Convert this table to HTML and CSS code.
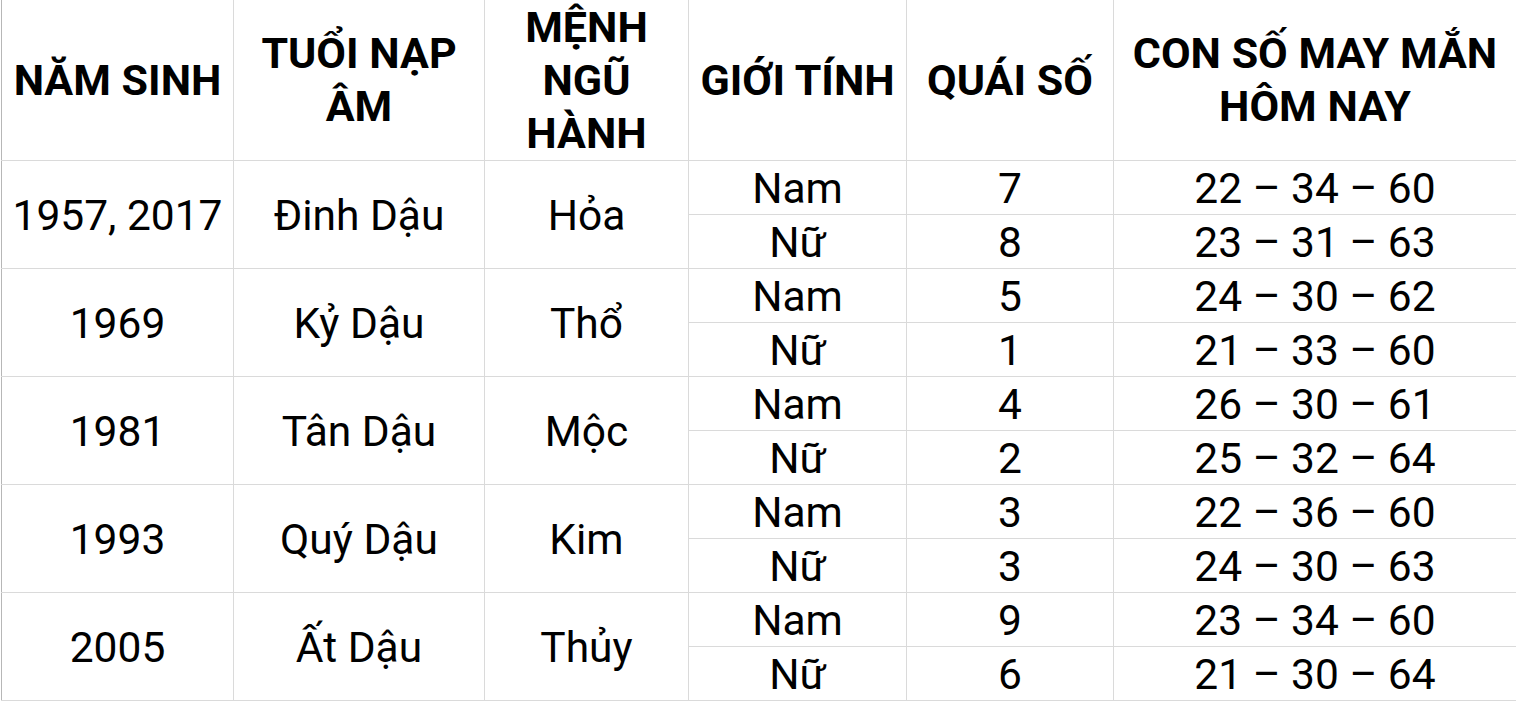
FILE: index.html
```html
<!DOCTYPE html>
<html lang="vi">
<head>
<meta charset="utf-8">
<link rel="stylesheet" href="styles.css">
</head>
<body>
<table class="tbl">
  <colgroup>
    <col class="c1"><col class="c2"><col class="c3"><col class="c4"><col class="c5"><col class="c6">
  </colgroup>
  <thead>
    <tr class="hrow">
      <th class="first">NĂM SINH</th>
      <th>TUỔI NẠP ÂM</th>
      <th>MỆNH NGŨ HÀNH</th>
      <th>GIỚI TÍNH</th>
      <th>QUÁI SỐ</th>
      <th>CON SỐ MAY MẮN HÔM NAY</th>
    </tr>
  </thead>
  <tbody>
    <tr><td class="first" rowspan="2">1957, 2017</td><td rowspan="2">Đinh Dậu</td><td rowspan="2">Hỏa</td><td>Nam</td><td>7</td><td>22 – 34 – 60</td></tr>
    <tr><td>Nữ</td><td>8</td><td>23 – 31 – 63</td></tr>
    <tr><td class="first" rowspan="2">1969</td><td rowspan="2">Kỷ Dậu</td><td rowspan="2">Thổ</td><td>Nam</td><td>5</td><td>24 – 30 – 62</td></tr>
    <tr><td>Nữ</td><td>1</td><td>21 – 33 – 60</td></tr>
    <tr><td class="first" rowspan="2">1981</td><td rowspan="2">Tân Dậu</td><td rowspan="2">Mộc</td><td>Nam</td><td>4</td><td>26 – 30 – 61</td></tr>
    <tr><td>Nữ</td><td>2</td><td>25 – 32 – 64</td></tr>
    <tr><td class="first" rowspan="2">1993</td><td rowspan="2">Quý Dậu</td><td rowspan="2">Kim</td><td>Nam</td><td>3</td><td>22 – 36 – 60</td></tr>
    <tr><td>Nữ</td><td>3</td><td>24 – 30 – 63</td></tr>
    <tr><td class="first" rowspan="2">2005</td><td rowspan="2">Ất Dậu</td><td rowspan="2">Thủy</td><td>Nam</td><td>9</td><td>23 – 34 – 60</td></tr>
    <tr><td>Nữ</td><td>6</td><td>21 – 30 – 64</td></tr>
  </tbody>
</table>
</body>
</html>
```
FILE: styles.css
```css
html, body {
  margin: 0;
  padding: 0;
  background: #fff;
}
body {
  padding-left: 1px;
  font-family: Roboto, "Liberation Sans", Arial, sans-serif;
  color: #000;
}
.tbl {
  border-collapse: collapse;
  table-layout: fixed;
  width: 1515px;
  margin-top: -1px;
}
.c1 { width: 232px; }
.c2 { width: 251px; }
.c3 { width: 204px; }
.c4 { width: 218px; }
.c5 { width: 207px; }
.c6 { width: 403px; }
.tbl th,
.tbl td {
  border: 1px solid #dadada;
  padding: 0;
  text-align: center;
  vertical-align: middle;
}
.tbl th {
  font-weight: 700;
  font-size: 43px;
  line-height: 53px;
  height: 160px;
  padding: 0 6px;
}
.tbl td {
  font-size: 42.5px;
  line-height: 48px;
  height: 50px;
  padding-top: 3px;
}
.tbl .first {
  border-left-color: #b7b7b7;
}
```
